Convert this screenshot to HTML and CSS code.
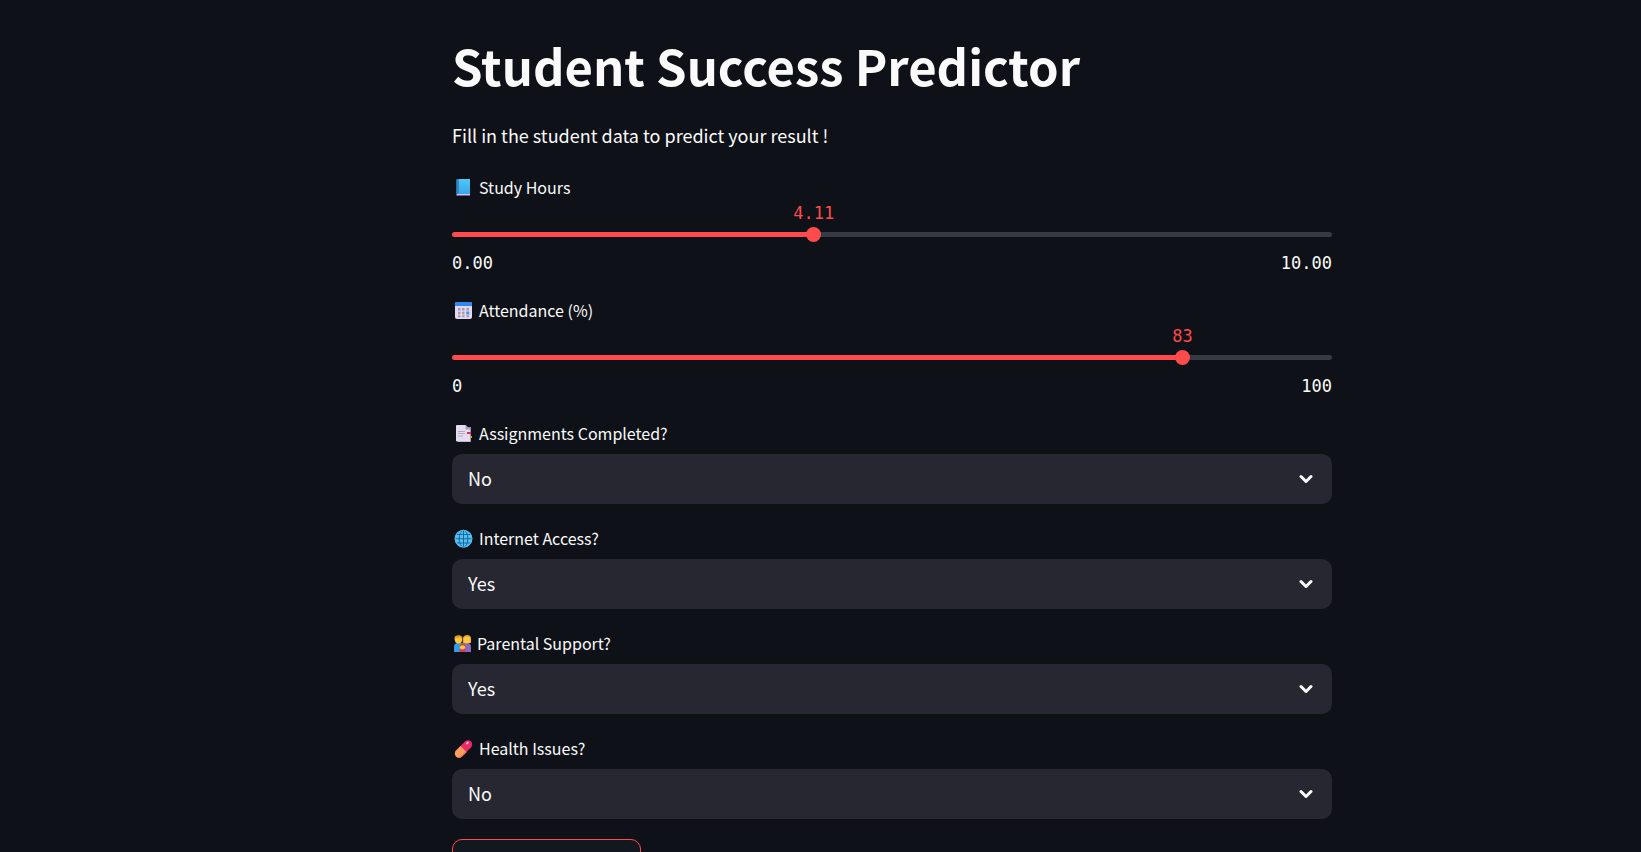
FILE: index.html
```html
<!DOCTYPE html>
<html lang="en">
<head>
<meta charset="utf-8">
<meta name="viewport" content="width=device-width, initial-scale=1">
<title>Student Success Predictor</title>
<link rel="stylesheet" href="styles.css">
</head>
<body>
<main class="page">
  <form class="form">
    <h1 class="title">Student Success Predictor</h1>
    <p class="intro">Fill in the student data to predict your result !</p>

    <div class="field">
      <label class="label" for="hours">
        <svg class="icon" width="24" height="20" viewBox="0 0 24 20" aria-hidden="true">
          <defs><linearGradient id="book" x2="0" y2="1"><stop offset="0" stop-color="#50c8f5"/><stop offset="1" stop-color="#38a8ee"/></linearGradient></defs>
          <path fill="#2871a8" d="M5 1h13v17H5a1 1 0 0 1-1-1V2a1 1 0 0 1 1-1z"/>
          <path fill="#d5c5e8" d="M5 15.600h13v1.500H5z"/>
          <path fill="#7460a8" d="M5 17h13v1H5z"/>
          <path fill="url(#book)" d="M6.500 1H18v15H6.500z"/>
          <path fill="#347fb5" d="M5 1.500h1.500V16H5z"/>
        </svg>
        Study Hours
      </label>
      <div class="slider" style="--value: 41.1%">
        <output class="value" for="hours">4.11</output>
        <div class="track"><input class="range" id="hours" type="range" min="0" max="10" step="0.01" value="4.11"></div>
        <div class="limits"><span>0.00</span><span>10.00</span></div>
      </div>
    </div>

    <div class="field">
      <label class="label" for="attendance">
        <svg class="icon" width="24" height="20" viewBox="0 0 24 20" aria-hidden="true">
          <rect x="3" y="1" width="17" height="17" rx="2" fill="#e3d8ee"/>
          <path fill="#2f87f2" d="M5 1h13a2 2 0 0 1 2 2v2H3V3a2 2 0 0 1 2-2z"/>
          <g fill="#a59ab2"><path d="M6 7h2.500v2.500H6zM10 7h2.500v2.500H10zM14.500 7H17v2.500h-2.500zM6 10.700h2.500v2.500H6zM10 10.700h2.500v2.500H10zM6 14.300h2.500v2H6zM10 14.300h2.500v2H10zM14.500 14.300H17v2h-2.500z"/></g>
          <path fill="#2f9bf5" d="M14.300 10.500h3v3h-3z"/>
        </svg>
        Attendance (%)
      </label>
      <div class="slider" style="--value: 83%">
        <output class="value" for="attendance">83</output>
        <div class="track"><input class="range" id="attendance" type="range" min="0" max="100" value="83"></div>
        <div class="limits"><span>0</span><span>100</span></div>
      </div>
    </div>

    <div class="field">
      <label class="label" for="assignments">
        <svg class="icon" width="24" height="20" viewBox="0 0 24 20" aria-hidden="true">
          <path fill="#9e91ad" d="M6 3h13v15H6z"/>
          <path fill="#e6dcef" d="M5 1h8.500L18 5.500V17.500H5a1 1 0 0 1-1-1V2a1 1 0 0 1 1-1z"/>
          <path fill="#aa9bb9" d="M13.500 1L18 5.500h-4.500z"/>
          <path stroke="#b3a8c0" d="M6 7.500h7M6 9.500h7M6 12h5"/>
          <path fill="#e0286e" d="M15 8h4v2h-4z"/>
          <path fill="#c9a04c" d="M18 12h2v2h-2z"/>
        </svg>
        Assignments Completed?
      </label>
      <div class="select-box">
        <select class="select" id="assignments"><option selected>No</option><option>Yes</option></select>
        <svg class="chevron" width="14" height="10" viewBox="0 0 14 10" aria-hidden="true"><path d="M2 2.500l5 5 5-5"/></svg>
      </div>
    </div>

    <div class="field">
      <label class="label" for="internet">
        <svg class="icon" width="24" height="20" viewBox="0 0 24 20" aria-hidden="true">
          <circle cx="11.500" cy="9.700" r="8.800" fill="#4fc0f8"/>
          <g fill="none" stroke="#17608f" stroke-width="0.900"><ellipse cx="11.500" cy="9.700" rx="4.300" ry="8.500"/><path d="M11.500 1v17.400M3 9.700h17M4.500 5.500h14M4.500 14h14"/></g>
          <circle cx="11.500" cy="9.700" r="8.400" fill="none" stroke="#55c2f7"/>
        </svg>
        Internet Access?
      </label>
      <div class="select-box">
        <select class="select" id="internet"><option>No</option><option selected>Yes</option></select>
        <svg class="chevron" width="14" height="10" viewBox="0 0 14 10" aria-hidden="true"><path d="M2 2.500l5 5 5-5"/></svg>
      </div>
    </div>

    <div class="field">
      <label class="label" for="parents">
        <svg class="icon" width="22" height="20" viewBox="0 0 22 20" aria-hidden="true">
          <path fill="#329ce9" d="M2 18v-5a4 4 0 0 1 4-4h5v9z"/>
          <path fill="#8a69bd" d="M11 18V9h4a4 4 0 0 1 4 4v5z"/>
          <circle cx="6.500" cy="5.700" r="3.700" fill="#ffc83d"/>
          <path fill="#ed9a28" d="M2.500 6V3.500C3 1 8.500.500 10.300 3v2L8 3.500 4 4z"/>
          <path fill="#f2a22c" d="M10.800 9V4c1-4 8-4 8.200 0v5z"/>
          <circle cx="15" cy="6" r="3.500" fill="#ffc83d"/>
          <path fill="#df345f" d="M7.500 18v-2c0-2 6-2 6 0v2z"/>
          <circle cx="10.500" cy="12.800" r="2.700" fill="#ffc640"/>
          <path fill="#ad5735" d="M7.500 13c-.500-5 6.500-5 6 0l-1.500-1.500h-3z"/>
        </svg>
        Parental Support?
      </label>
      <div class="select-box">
        <select class="select" id="parents"><option>No</option><option selected>Yes</option></select>
        <svg class="chevron" width="14" height="10" viewBox="0 0 14 10" aria-hidden="true"><path d="M2 2.500l5 5 5-5"/></svg>
      </div>
    </div>

    <div class="field">
      <label class="label" for="health">
        <svg class="icon" width="24" height="20" viewBox="0 0 24 20" aria-hidden="true">
          <g transform="rotate(-45 11.500 10)">
            <rect x="1" y="5.800" width="21" height="8.400" rx="4.200" fill="#ed2b68"/>
            <path fill="#ff9f5c" d="M11.500 5.800H5.200a4.200 4.200 0 0 0 0 8.400h6.300z"/>
            <path fill="#f47d67" d="M2 12.500a4.200 4.200 0 0 0 3.200 1.700h6.300v-1.500z"/>
            <ellipse cx="18.500" cy="8.500" rx="1.600" ry="1" fill="#ffb9d0"/>
          </g>
        </svg>
        Health Issues?
      </label>
      <div class="select-box">
        <select class="select" id="health"><option selected>No</option><option>Yes</option></select>
        <svg class="chevron" width="14" height="10" viewBox="0 0 14 10" aria-hidden="true"><path d="M2 2.500l5 5 5-5"/></svg>
      </div>
    </div>

    <button class="submit" type="button" aria-label="Predict"></button>
  </form>
</main>
</body>
</html>
```

FILE: styles.css
```css
* { box-sizing: border-box; }

body {
  margin: 0;
  background: #0e1117;
  color: #fafafa;
  font-family: "Noto Sans CJK JP", "Noto Sans", sans-serif;
}

.page {
  display: flex;
  justify-content: center;
  height: 100vh;
  overflow: hidden;
  padding: 32px 0 0 143px;
}

.form {
  display: flex;
  flex-direction: column;
  gap: 25px;
  width: 100%;
  max-width: 880px;
}

.title {
  margin: 0;
  font-size: 49px;
  font-weight: 700;
  line-height: 66px;
}

.intro {
  margin: -3px 0 3px;
  font-size: 18px;
  line-height: 30px;
}

.field {
  display: flex;
  flex-direction: column;
  gap: 10px;
}

.label {
  display: flex;
  align-items: flex-start;
  gap: 3px;
  height: 20px;
  font-size: 16px;
  line-height: 18px;
}

.icon { flex: none; }

.slider {
  display: flex;
  flex-direction: column;
  margin-top: -5px;
  font-family: "DejaVu Sans Mono", monospace;
  font-size: 17px;
}

.value {
  align-self: flex-start;
  margin-left: var(--value);
  transform: translateX(-50%);
  color: #ff4b4b;
  line-height: 20px;
}

.track {
  display: flex;
  align-items: center;
  height: 5px;
  margin: 9px 0 14px;
  border-radius: 3px;
  background: linear-gradient(to right, #ff4b4b var(--value), #363942 var(--value));
}

.range {
  flex: none;
  width: calc(100% + 14px);
  height: 15px;
  margin: 0 -7px;
  appearance: none;
  background: transparent;
}

.range::-webkit-slider-thumb {
  appearance: none;
  width: 15px;
  height: 15px;
  border-radius: 50%;
  background: #ff4b4b;
}

.limits {
  display: flex;
  justify-content: space-between;
  line-height: 25px;
}

.select-box {
  display: flex;
  align-items: center;
  position: relative;
}

.select {
  width: 100%;
  height: 50px;
  padding: 0 48px 2px 16px;
  border: 0;
  border-radius: 10px;
  appearance: none;
  background: #262730;
  color: #fafafa;
  font-family: inherit;
  font-size: 18px;
}

.chevron {
  position: absolute;
  right: 19px;
  fill: none;
  stroke: #fafafa;
  stroke-width: 3;
  stroke-linecap: round;
  stroke-linejoin: round;
  pointer-events: none;
}

.submit {
  flex: none;
  width: 189px;
  height: 50px;
  margin-top: -5px;
  border: 1px solid #ff4b4b;
  border-radius: 10px;
  background: #131720;
}
```
